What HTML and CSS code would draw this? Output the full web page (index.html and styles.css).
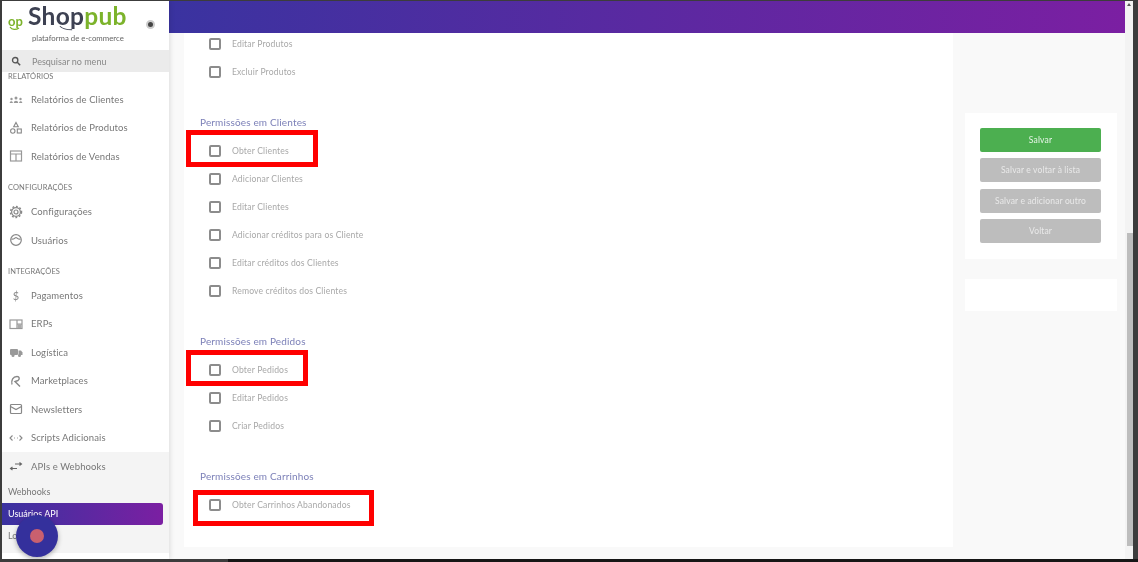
FILE: index.html
```html
<!DOCTYPE html>
<html lang="pt-BR">
<head>
<meta charset="utf-8">
<title>Shoppub</title>
<link rel="stylesheet" href="styles.css">
</head>
<body>
<div class="window">
  <aside class="sidebar">
    <div class="brand">
      <div class="brand-mark">op<svg class="brand-smile" viewBox="0 0 14 5"><path d="M2 1c2 3 6 3 9 1" fill="none" stroke="#7cb32b" stroke-width="1.3"/></svg></div>
      <div class="brand-text">
        <div class="brand-name"><span class="shop">Shop</span><span class="pub">pub</span></div>
        <svg class="brand-curve" viewBox="0 0 16 6"><path d="M1 1c3 3 8 4 14 4" fill="none" stroke="#3a3f4f" stroke-width="1.2"/></svg>
        <div class="brand-tag">plataforma de e-commerce</div>
      </div>
      <span class="brand-radio"></span>
    </div>
    <div class="search">
      <svg class="search-icon" viewBox="0 0 12 12"><circle cx="5" cy="5" r="3.2" fill="none" stroke="#555" stroke-width="1.6"/><path d="M7.5 7.5 11 11" stroke="#555" stroke-width="1.8"/></svg>
      <span>Pesquisar no menu</span>
    </div>
    <nav class="menu">
      <div class="section first">RELATÓRIOS</div>
      <a class="item"><svg viewBox="0 0 14 14"><g fill="#999"><circle cx="7" cy="6" r="1.5"/><circle cx="2.5" cy="7" r="1.2"/><circle cx="11.5" cy="7" r="1.2"/><path d="M4.8 11c0-3 4.4-3 4.4 0zM.7 11c0-2.4 3.2-2.4 3.2 0zM10.100 11c0-2.400 3.200-2.400 3.200 0z"/></g></svg>Relatórios de Clientes</a>
      <a class="item"><svg viewBox="0 0 14 14"><g fill="none" stroke="#888" stroke-width="1.100"><path d="M7 1.500 9.300 5.800H4.700z"/><circle cx="3.800" cy="10" r="2.200"/><rect x="8.300" y="8" width="4" height="4"/></g></svg>Relatórios de Produtos</a>
      <a class="item"><svg viewBox="0 0 14 14"><g fill="none" stroke="#999" stroke-width="1.200"><rect x="1.500" y="2" width="11" height="10"/><path d="M1.500 5h11M7 5v7"/></g></svg>Relatórios de Vendas</a>
      <div class="section config">CONFIGURAÇÕES</div>
      <a class="item"><svg viewBox="0 0 14 14"><circle cx="7" cy="7" r="2" fill="none" stroke="#888" stroke-width="1.200"/><circle cx="7" cy="7" r="4.400" fill="none" stroke="#888" stroke-width="1.200"/><circle cx="7" cy="7" r="5.500" fill="none" stroke="#888" stroke-width="1.500" stroke-dasharray="1.800 1.800"/></svg>Configurações</a>
      <a class="item"><svg viewBox="0 0 14 14"><circle cx="7" cy="7" r="5.300" fill="none" stroke="#888" stroke-width="1.200"/><path d="M2.500 6c2 1 3.500-1.500 4.500-1.500s2.500 2.500 4.500 1.500" fill="none" stroke="#888" stroke-width="1.200"/></svg>Usuários</a>
      <div class="section integ">INTEGRAÇÕES</div>
      <a class="item"><span class="glyph">$</span>Pagamentos</a>
      <a class="item"><svg viewBox="0 0 14 14"><g fill="none" stroke="#999" stroke-width="1.200"><rect x="1" y="3" width="12" height="8.500"/><path d="M8 3v8.500M8 7.200h5"/></g><rect x="8.500" y="7.500" width="4" height="3.500" fill="#aaa"/></svg>ERPs</a>
      <a class="item"><svg viewBox="0 0 14 14"><g fill="#999"><rect x="1" y="4" width="8" height="6" rx="1"/><path d="M9.500 5.500H12l1.500 2v2.500h-4z"/><circle cx="4" cy="10.500" r="1.500"/><circle cx="10.500" cy="10.500" r="1.500"/></g></svg>Logística</a>
      <a class="item"><svg viewBox="0 0 14 14"><g fill="none" stroke="#888" stroke-width="1.400"><path d="M3 10.500C2 6 4 2.500 8 2.500c2.500 0 3 2.500 1 4L6 7.500l5 5"/></g></svg>Marketplaces</a>
      <a class="item"><svg viewBox="0 0 14 14"><g fill="none" stroke="#888" stroke-width="1.200"><rect x="1.500" y="2.500" width="11" height="9" rx="1"/><path d="M1.500 4.500 7 7.500l5.500-3"/></g></svg>Newsletters</a>
      <a class="item"><svg viewBox="0 0 14 14"><g fill="none" stroke="#888" stroke-width="1.100"><path d="M3.500 4.500 1 7l2.500 2.500M10.500 4.500 13 7l-2.500 2.500"/><path d="M5 7h.8M8.200 7H9" stroke-width="1.200"/></g></svg>Scripts Adicionais</a>
      <div class="group">
        <a class="item"><svg viewBox="0 0 14 14"><g fill="none" stroke="#666" stroke-width="1.100"><path d="M6 5h6.500M10.500 3.500 12.500 5l-2 1.500M8 9.500H1.500M3.500 8 1.500 9.500l2 1.500"/></g></svg>APIs e Webhooks</a>
        <a class="sub">Webhooks</a>
        <a class="sub active">Usuários API</a>
        <a class="sub">Logs</a>
      </div>
    </nav>
    <button class="fab" aria-label="Abrir"><span class="fab-dot"></span></button>
  </aside>

  <div class="content">
    <header class="topbar"></header>
    <div class="columns">
      <main class="panel">
        <section class="perm-group first-group">
          <label class="row"><span class="box"></span>Editar Produtos</label>
          <label class="row"><span class="box"></span>Excluir Produtos</label>
        </section>
        <section class="perm-group">
          <h2>Permissões em Clientes</h2>
          <label class="row"><span class="box"></span>Obter Clientes<span class="mark mark-clientes"></span></label>
          <label class="row"><span class="box"></span>Adicionar Clientes</label>
          <label class="row"><span class="box"></span>Editar Clientes</label>
          <label class="row"><span class="box"></span>Adicionar créditos para os Cliente</label>
          <label class="row"><span class="box"></span>Editar créditos dos Clientes</label>
          <label class="row"><span class="box"></span>Remove créditos dos Clientes</label>
        </section>
        <section class="perm-group">
          <h2>Permissões em Pedidos</h2>
          <label class="row"><span class="box"></span>Obter Pedidos<span class="mark mark-pedidos"></span></label>
          <label class="row"><span class="box"></span>Editar Pedidos</label>
          <label class="row"><span class="box"></span>Criar Pedidos</label>
        </section>
        <section class="perm-group">
          <h2>Permissões em Carrinhos</h2>
          <label class="row"><span class="box"></span>Obter Carrinhos Abandonados<span class="mark mark-carrinhos"></span></label>
        </section>
      </main>
      <aside class="side">
        <div class="card actions">
          <button class="btn primary">Salvar</button>
          <button class="btn">Salvar e voltar à lista</button>
          <button class="btn">Salvar e adicionar outro</button>
          <button class="btn">Voltar</button>
        </div>
        <div class="card empty"></div>
      </aside>
    </div>
  </div>
  <div class="scrollbar"><span class="arrow"></span><span class="thumb"></span></div>
</div>
<div class="taskbar"></div>
</body>
</html>
```
FILE: styles.css
```css
* { box-sizing: border-box; }
html, body { margin: 0; height: 100%; }
body {
  background: #3c3c3c;
  font-family: "Lato", "Liberation Sans", sans-serif;
  overflow: hidden;
}
.window {
  display: flex;
  width: 1131px;
  height: 558px;
  margin: 1px 0 0 2px;
  background: #f9f9f9;
  overflow: hidden;
  filter: blur(0.7px);
}
.taskbar {
  height: 3px;
  background: linear-gradient(90deg, #3c3c3c 228px, #161616 228px);
}

/* Sidebar */
.sidebar {
  position: relative;
  flex: 0 0 167px;
  background: #fff;
  box-shadow: 1px 0 5px rgba(0,0,0,.12);
  z-index: 2;
  display: flex;
  flex-direction: column;
}
.brand {
  height: 49px;
  display: flex;
  align-items: flex-start;
  padding-left: 6px;
}
.brand-mark {
  position: relative;
  width: 20px;
  margin-top: 13px;
  font-size: 13px;
  font-weight: 700;
  line-height: 14px;
  color: #7cb32b;
}
.brand-smile { position: absolute; left: 0; top: 12px; width: 14px; height: 5px; }
.brand-text { position: relative; width: 116px; }
.brand-name {
  height: 30px;
  font-size: 24.500px;
  font-weight: 700;
  line-height: 30px;
  letter-spacing: .3px;
}
.shop { color: #3d4152; }
.pub { color: #7cb32b; }
.brand-curve { position: absolute; left: 31px; top: 24px; width: 14px; height: 6px; }
.brand-tag {
  margin: 3px 0 0 4px;
  font-size: 7.800px;
  line-height: 9px;
  color: #666;
  white-space: nowrap;
}
.brand-radio {
  width: 9px;
  height: 9px;
  margin: 19px 0 0 2px;
  border-radius: 50%;
  background: #444;
  border: 2px solid #ccc;
}
.search {
  height: 22px;
  background: #ebebeb;
  display: flex;
  align-items: center;
  padding-left: 9px;
  gap: 11px;
  font-size: 9px;
  color: #888;
}
.search-icon { width: 10px; height: 10px; }
.menu { flex: 1; overflow: hidden; display: flex; flex-direction: column; }
.section {
  flex: none;
  font-size: 7.500px;
  line-height: 10px;
  color: #777;
  padding-left: 6px;
  letter-spacing: .1px;
}
.section.first { margin-bottom: 3px; }
.section.config { margin-top: 12px; margin-bottom: 5px; }
.section.integ { margin-top: 12.500px; margin-bottom: 4px; }
.item {
  height: 28.500px;
  flex: none;
  display: flex;
  align-items: center;
  padding-left: 7px;
  gap: 8px;
  font-size: 9.500px;
  color: #777;
  letter-spacing: .1px;
}
.item svg { width: 14px; height: 14px; flex: none; }
.glyph { width: 14px; text-align: center; font-size: 11px; color: #888; }
.group {
  background: #f4f4f4;
  padding-right: 6px;
  height: 101px;
  flex: none;
}
.sub {
  display: flex;
  align-items: center;
  height: 22px;
  padding-left: 6px;
  font-size: 9px;
  color: #777;
}
.sub.active {
  color: #fff;
  border-radius: 0 3px 3px 0;
  background: linear-gradient(90deg, #3a32a0, #7b1fa2);
}
.fab {
  position: absolute;
  left: 14px;
  top: 514px;
  width: 42px;
  height: 42px;
  padding: 0;
  border: 0;
  border-radius: 50%;
  background: #34309c;
  box-shadow: 0 2px 5px rgba(0,0,0,.3);
  display: flex;
  align-items: center;
  justify-content: center;
}
.fab-dot { width: 14px; height: 14px; border-radius: 50%; background: #c9606f; }

/* Content */
.content { flex: 1; display: flex; flex-direction: column; min-width: 0; }
.topbar {
  height: 32px;
  flex: none;
  background: linear-gradient(90deg, #3a33a0, #7b1fa2);
}
.columns { flex: 1; display: flex; padding-left: 15px; gap: 12px; }
.panel {
  width: 769px;
  height: 514px;
  background: #fff;
}
.perm-group { padding-bottom: 26px; }
.perm-group.first-group { margin-top: -3px; }
.perm-group h2 {
  margin: 0 0 5px;
  padding-left: 16px;
  height: 20px;
  font-size: 10px;
  font-weight: 400;
  line-height: 20px;
  letter-spacing: .15px;
  color: #7c80b8;
}
.row {
  position: relative;
  display: flex;
  align-items: center;
  height: 28px;
  padding-left: 25px;
  gap: 11px;
  font-size: 8.600px;
  color: #a8a8a8;
  letter-spacing: .15px;
}
.box {
  width: 12px;
  height: 12px;
  border: 2px solid #8c8c8c;
  border-radius: 2px;
  background: #fff;
  flex: none;
}
.mark { position: absolute; height: 36px; border: 5px solid #f00; }
.mark-clientes { left: 2px; width: 132px; top: -7px; height: 37px; }
.mark-pedidos { left: 2px; width: 122px; top: -6px; }
.mark-carrinhos { left: 9px; width: 181px; top: -1px; }

/* Right column */
.side {
  width: 152px;
  padding-top: 80px;
  display: flex;
  flex-direction: column;
  gap: 20px;
}
.card { background: #fff; }
.actions {
  height: 146px;
  padding: 15px 16px 0 15px;
  display: flex;
  flex-direction: column;
  gap: 6.330px;
}
.empty { height: 32px; }
.btn {
  height: 24px;
  padding: 0;
  border: 0;
  border-radius: 2px;
  background: #bdbdbd;
  color: #e9e9e9;
  font: 8.500px "Lato", "Liberation Sans", sans-serif;
  letter-spacing: .15px;
}
.btn.primary { background: #4caf50; color: #e8f5e9; }

/* Scrollbar */
.scrollbar {
  position: relative;
  flex: 0 0 8px;
  background: #f3f3f3;
}
.arrow {
  position: absolute;
  left: 2px;
  top: 2px;
  border: 2.500px solid transparent;
  border-top: 0;
  border-bottom: 3px solid #555;
}
.thumb {
  position: absolute;
  left: 2px;
  top: 232px;
  width: 6px;
  height: 313px;
  background: #bdbdbd;
}
```
